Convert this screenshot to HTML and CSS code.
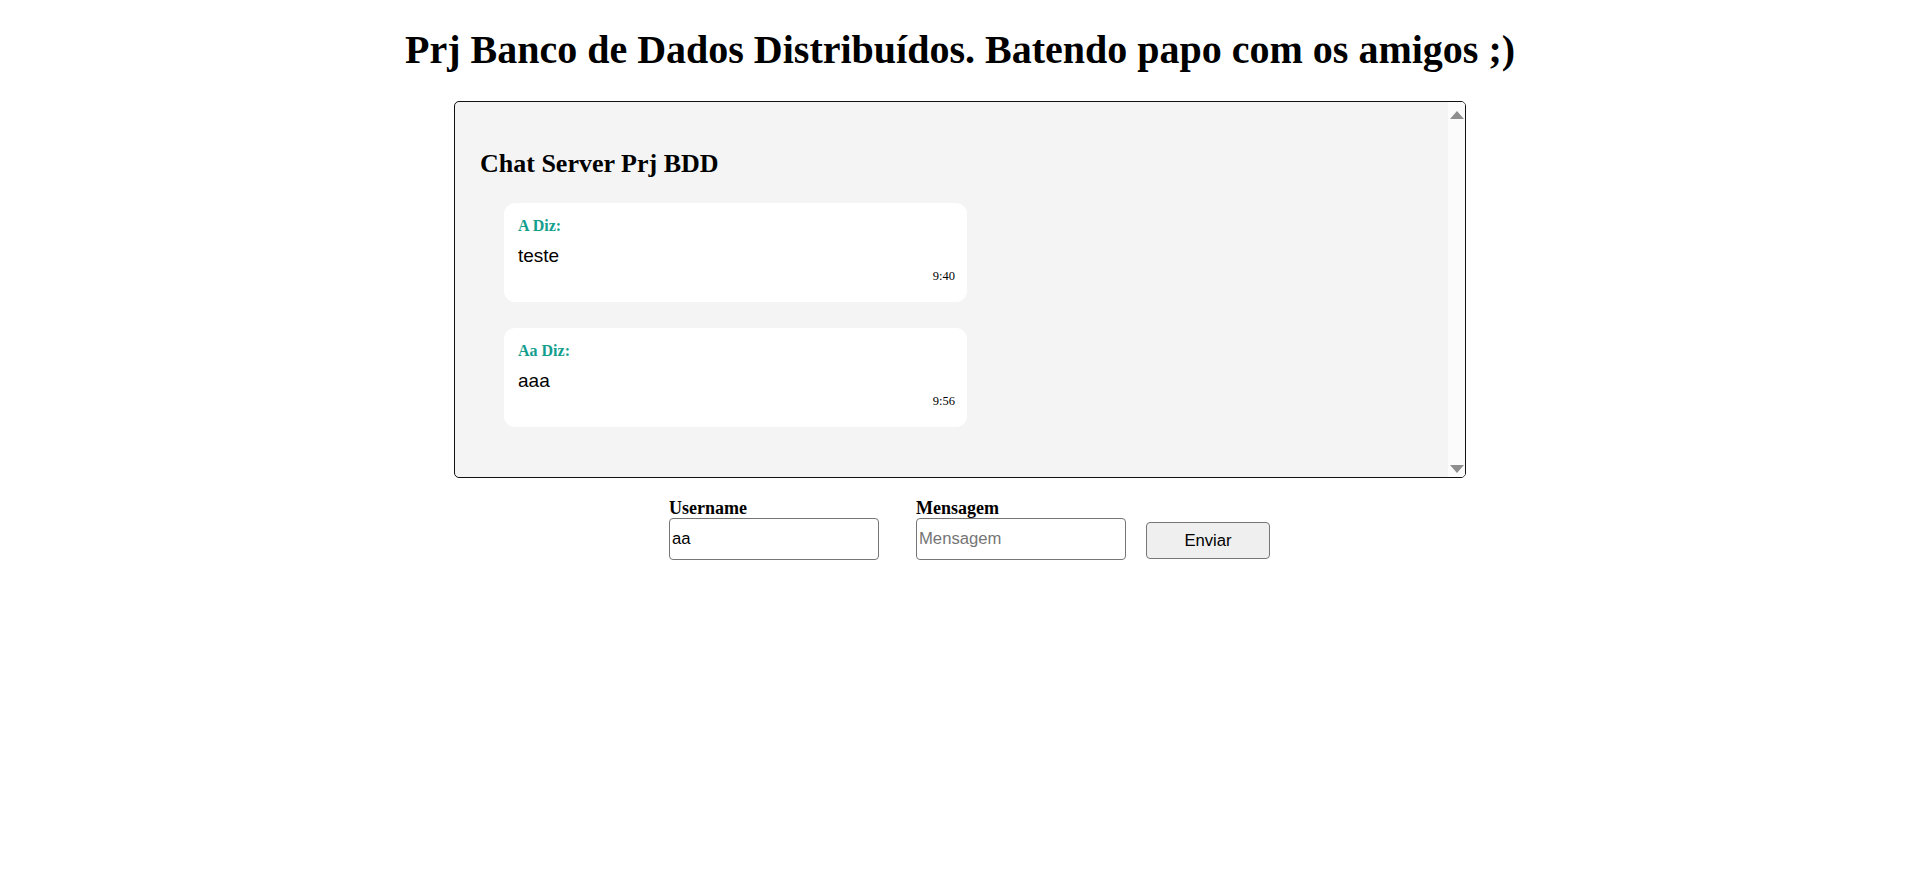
FILE: index.html
```html
<!DOCTYPE html>
<html lang="pt-BR">
<head>
<meta charset="utf-8">
<title>Chat Server Prj BDD</title>
<link rel="stylesheet" href="styles.css">
</head>
<body>
<h1 class="page-title">Prj Banco de Dados Distribuídos. Batendo papo com os amigos ;)</h1>
<div class="chat-box">
  <div class="chat-content">
    <h2 class="chat-title">Chat Server Prj BDD</h2>
    <div class="msg">
      <div class="msg-author">A Diz:</div>
      <div class="msg-text">teste</div>
      <div class="msg-time">9:40</div>
    </div>
    <div class="msg">
      <div class="msg-author">Aa Diz:</div>
      <div class="msg-text">aaa</div>
      <div class="msg-time">9:56</div>
    </div>
  </div>
  <div class="scrollbar">
    <span class="arrow arrow-up"><svg width="14" height="8" viewBox="0 0 14 8"><polygon points="0,8 7,0 14,8" fill="#8e8e8e"/></svg></span>
    <span class="arrow arrow-down"><svg width="14" height="8" viewBox="0 0 14 8"><polygon points="0,0 14,0 7,8" fill="#8e8e8e"/></svg></span>
  </div>
</div>
<form class="chat-form">
  <div class="field">
    <label class="field-label" for="user">Username</label>
    <input class="field-input" id="user" type="text" value="aa">
  </div>
  <div class="field">
    <label class="field-label" for="msg">Mensagem</label>
    <input class="field-input" id="msg" type="text" placeholder="Mensagem">
  </div>
  <button class="send-btn" type="button">Enviar</button>
</form>
</body>
</html>
```

FILE: styles.css
```css
html, body {
  margin: 0;
  padding: 0;
  background: #ffffff;
  font-family: "Liberation Serif", "Times New Roman", serif;
  color: #000;
}

.page-title {
  margin: 28px 0 29px;
  font-size: 40px;
  line-height: 44px;
  font-weight: bold;
  text-align: center;
}

.chat-box {
  box-sizing: border-box;
  width: 1012px;
  height: 377px;
  margin: 0 auto;
  border: 1px solid #111;
  border-radius: 5px;
  background: #f4f4f4;
  display: flex;
  overflow: hidden;
}

.chat-content {
  flex: 1;
  padding: 20px 25px 0;
}

.chat-title {
  margin: 27px 0 25px;
  font-size: 26px;
  line-height: 29px;
  font-weight: bold;
}

.msg {
  width: 463px;
  box-sizing: border-box;
  margin: 0 0 26px 24px;
  padding: 14px 12px 19px 14px;
  background: #fff;
  border-radius: 11px;
}

.msg-author {
  font-size: 16px;
  line-height: 18px;
  font-weight: bold;
  color: #139e8e;
}

.msg-text {
  margin-top: 10px;
  font-family: "Liberation Sans", Arial, sans-serif;
  font-size: 19px;
  line-height: 21px;
}

.msg-time {
  margin-top: 3px;
  font-size: 12.5px;
  line-height: 14px;
  text-align: right;
}

.scrollbar {
  width: 17px;
  background: #fbfbfb;
  display: flex;
  flex-direction: column;
  justify-content: space-between;
}

.arrow {
  height: 17px;
  display: flex;
  justify-content: center;
}

.arrow-up {
  align-items: flex-end;
}

.arrow-down {
  align-items: center;
}

.arrow svg {
  display: block;
}

.chat-form {
  display: flex;
  justify-content: center;
  align-items: flex-end;
  margin-top: 20px;
  padding-left: 19px;
}

.field {
  display: flex;
  flex-direction: column;
  margin-right: 37px;
}

.field + .field {
  margin-right: 20px;
}

.field-label {
  font-size: 18px;
  line-height: 20px;
  font-weight: bold;
}

.field-input {
  box-sizing: border-box;
  width: 210px;
  height: 42px;
  margin: 0;
  padding: 1px 2px;
  border: 1px solid #767676;
  border-radius: 4px;
  background: #fff;
  font-family: "Liberation Sans", Arial, sans-serif;
  font-size: 16.67px;
  color: #000;
}

.field-input::placeholder {
  color: #757575;
}

.send-btn {
  box-sizing: border-box;
  width: 124px;
  height: 37px;
  margin: 0 0 1px;
  border: 1px solid #767676;
  border-radius: 4px;
  background: #efefef;
  font-family: "Liberation Sans", Arial, sans-serif;
  font-size: 16.67px;
  color: #000;
}
```
